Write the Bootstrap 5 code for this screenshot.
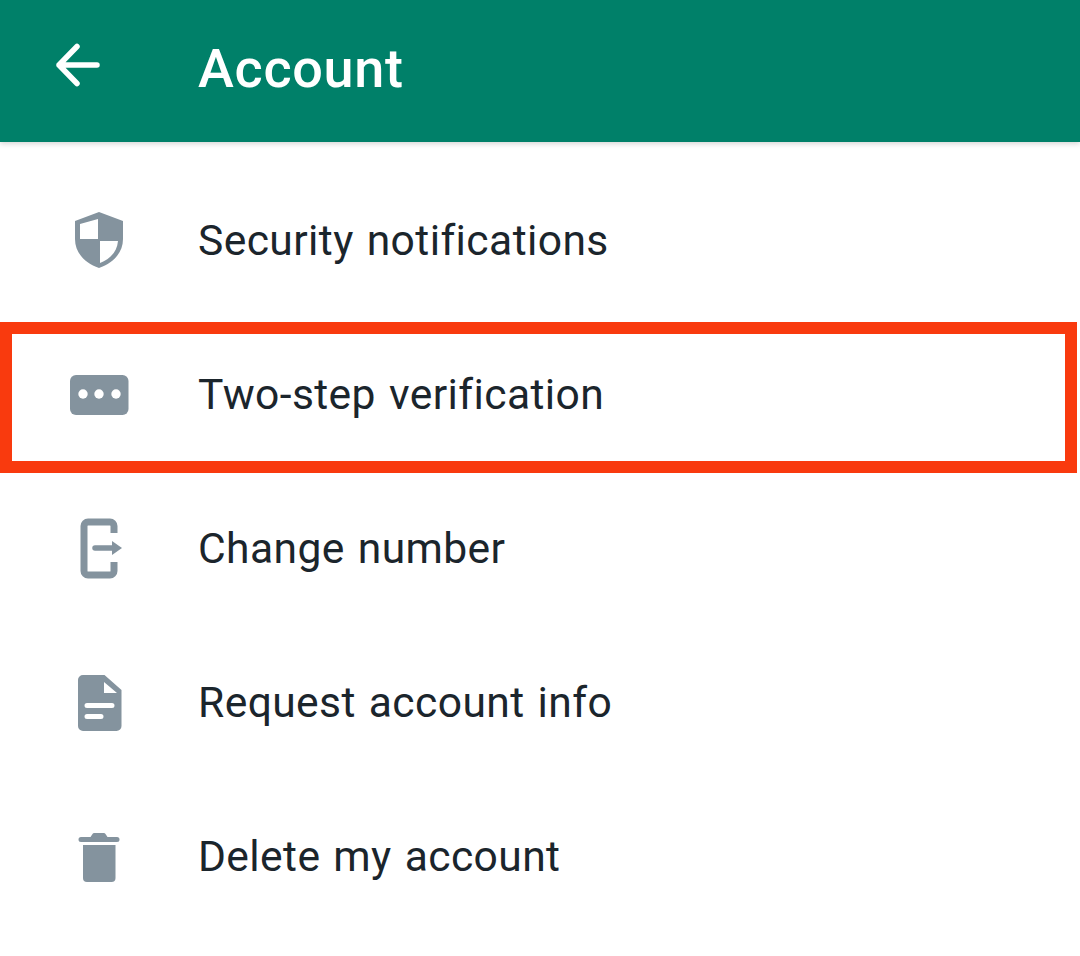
<!doctype html>
<html lang="en"><head><meta charset="utf-8"><title>Account</title>
<link href="https://cdn.jsdelivr.net/npm/bootstrap@5.3.0/dist/css/bootstrap.min.css" rel="stylesheet">
<style>
html,body{height:100%}
body{font-family:Roboto,"Liberation Sans",sans-serif;background:#fff;overflow:hidden}
.app-bar{height:142px;background:#008069;color:#fff;box-shadow:0 2px 5px rgba(0,0,0,.16);padding-left:50px}
.app-bar svg{width:56px;height:56px;margin-right:92px;display:block;margin-bottom:12px}
.app-title{font-size:54px;font-weight:500;line-height:1;letter-spacing:.7px;margin-bottom:4px}
.settings{padding-top:21px}
.set-row{height:154px;position:relative;color:#1b252c}
.set-icon{width:199px;flex:none;display:flex;justify-content:center}
.set-icon svg{width:100px;height:80px;display:block}
.set-label{font-size:42.6px;line-height:1;letter-spacing:.4px;word-spacing:2px;margin-top:1px;margin-left:-1px}
.hilite{position:absolute;left:0;top:5px;width:1077px;height:151px;border:12px solid #f93a0e;pointer-events:none}
</style></head>
<body>
<div class="app-bar d-flex align-items-center">
<svg viewBox="0 0 56 56" fill="none" stroke="#fff" stroke-width="5.5" stroke-linecap="round" stroke-linejoin="round"><path d="M47 28H9M27 9.500 9 28l18 18.500"/></svg>
<div class="app-title">Account</div>
</div>
<div class="settings">
<div class="set-row d-flex align-items-center">
<div class="set-icon"><svg viewBox="0 0 100 80" fill="#84939e"><path fill-rule="evenodd" d="M49 12 25 21v18c0 14 10 24 24 29 14-5 24-15 24-29V21Zm-1 7v20H30V24ZM50 41h18c-1 11-8 18-18 22Z"/></svg></div>
<div class="set-label">Security notifications</div>
</div>
<div class="set-row d-flex align-items-center">
<div class="set-icon"><svg viewBox="0 0 100 80"><rect x="20" y="21" width="58.500" height="40" rx="6" fill="#84939e"/><circle cx="33" cy="40" r="4.700" fill="#fff"/><circle cx="49" cy="40" r="4.700" fill="#fff"/><circle cx="66" cy="40" r="4.700" fill="#fff"/></svg></div>
<div class="set-label">Two-step verification</div>
<div class="hilite"></div>
</div>
<div class="set-row d-flex align-items-center">
<div class="set-icon"><svg viewBox="0 0 100 80" fill="none" stroke="#84939e" stroke-width="7"><path d="M64 25v-7a4 4 0 0 0-4-4H38a4 4 0 0 0-4 4v45a4 4 0 0 0 4 4h22a4 4 0 0 0 4-4v-9"/><path d="M45 40h18" stroke-width="5.500" stroke-linecap="round"/><path d="M62 33l10 7-10 7Z" fill="#84939e" stroke="none"/></svg></div>
<div class="set-label">Change number</div>
</div>
<div class="set-row d-flex align-items-center">
<div class="set-icon"><svg viewBox="0 0 100 80"><path fill="#84939e" fill-rule="evenodd" d="M33 13h21.500L71.500 28v36a5 5 0 0 1-5 5H33a5 5 0 0 1-5-5V18a5 5 0 0 1 5-5Zm21 7v11h13ZM37 41a2.500 2.500 0 0 0 0 5h25a2.500 2.500 0 0 0 0-5Zm0 11a2.500 2.500 0 0 0 0 5h14a2.500 2.500 0 0 0 0-5Z"/></svg></div>
<div class="set-label">Request account info</div>
</div>
<div class="set-row d-flex align-items-center">
<div class="set-icon"><svg viewBox="0 0 100 80" fill="#84939e"><path d="M31 21h9.500l2-3a2 2 0 0 1 2-1h9a2 2 0 0 1 2 1l2 3H67a2.500 2.500 0 0 1 0 5H31a2.500 2.500 0 0 1 0-5Z"/><path d="M33 29h32.500v33a4 4 0 0 1-4 4H37a4 4 0 0 1-4-4Z"/></svg></div>
<div class="set-label">Delete my account</div>
</div>
</div>
</body></html>
